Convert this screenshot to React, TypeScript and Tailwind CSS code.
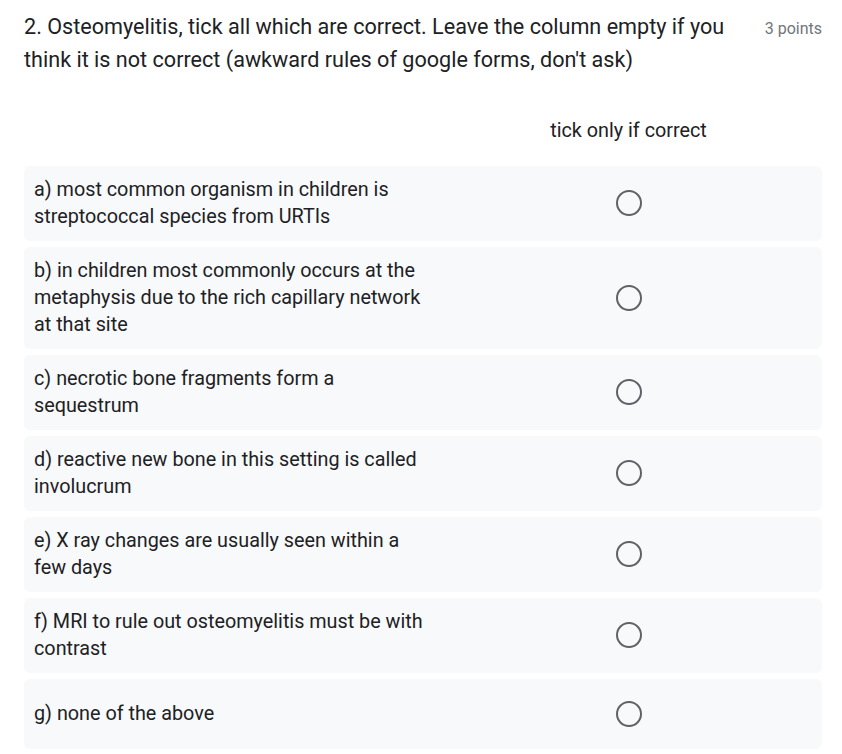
import React from "react";

const items = [
  "a) most common organism in children is streptococcal species from URTIs",
  "b) in children most commonly occurs at the metaphysis due to the rich capillary network at that site",
  "c) necrotic bone fragments form a sequestrum",
  "d) reactive new bone in this setting is called involucrum",
  "e) X ray changes are usually seen within a few days",
  "f) MRI to rule out osteomyelitis must be with contrast",
  "g) none of the above",
];

export default function App() {
  return (
    <div className="w-[842px] bg-white pl-[24px] pr-[20px] pt-[10px] text-[#202124]" style={{ fontFamily: "Roboto, 'Noto Sans', sans-serif" }}>
      <div className="flex items-start justify-between">
        <div className="w-[720px] text-[21.6px] leading-[33px]">
          2. Osteomyelitis, tick all which are correct. Leave the column empty if you think it is not correct (awkward rules of google forms, don't ask)
        </div>
        <div className="pt-[8px] text-[16px] leading-[22px] text-[#70757a]">3 points</div>
      </div>
      <div className="mt-[41px] flex">
        <div className="w-[411px]" />
        <div className="flex-1 text-center text-[19.8px] leading-[27px]">tick only if correct</div>
      </div>
      <div className="mt-[21.5px] flex flex-col gap-[6px]">
        {items.map((t, i) => (
          <div key={i} className="flex min-h-[70px] items-center rounded-[6px] bg-[#f8f9fa]">
            <div className="w-[411px] py-[10.5px] pl-[10px] pr-[6px] text-[19.8px] leading-[27px]">{t}</div>
            <div className="flex flex-1 justify-center">
              <div className="h-[26px] w-[26px] rounded-full border-[2.5px] border-[#5f6368]" />
            </div>
          </div>
        ))}
      </div>
    </div>
  );
}
